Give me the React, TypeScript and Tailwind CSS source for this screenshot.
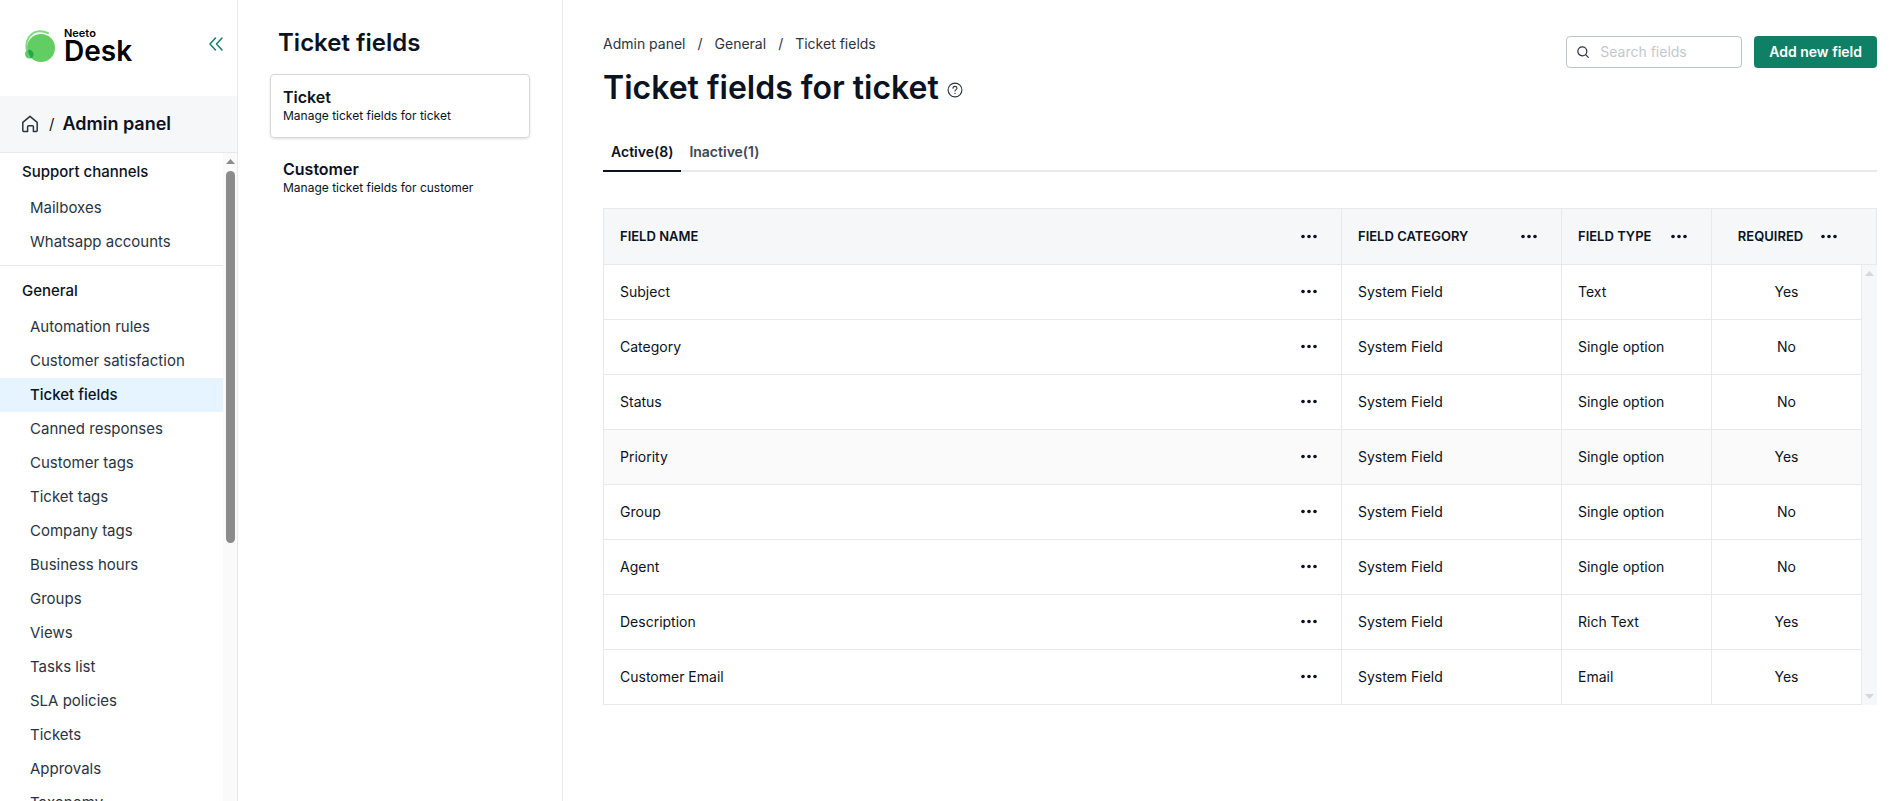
import { useState } from 'react';
import clsx from 'clsx';

interface NavSection {
  title: string;
  items: string[];
}

interface TicketField {
  name: string;
  category: string;
  type: string;
  required: boolean;
}

const NAV_SECTIONS: NavSection[] = [
  { title: 'Support channels', items: ['Mailboxes', 'Whatsapp accounts'] },
  {
    title: 'General',
    items: [
      'Automation rules',
      'Customer satisfaction',
      'Ticket fields',
      'Canned responses',
      'Customer tags',
      'Ticket tags',
      'Company tags',
      'Business hours',
      'Groups',
      'Views',
      'Tasks list',
      'SLA policies',
      'Tickets',
      'Approvals',
      'Taxonomy',
    ],
  },
];

const RESOURCES = [
  { name: 'Ticket', description: 'Manage ticket fields for ticket' },
  { name: 'Customer', description: 'Manage ticket fields for customer' },
];

const TABS = ['Active(8)', 'Inactive(1)'];

const BREADCRUMBS = ['Admin panel', 'General', 'Ticket fields'];

const FIELDS: TicketField[] = [
  { name: 'Subject', category: 'System Field', type: 'Text', required: true },
  { name: 'Category', category: 'System Field', type: 'Single option', required: false },
  { name: 'Status', category: 'System Field', type: 'Single option', required: false },
  { name: 'Priority', category: 'System Field', type: 'Single option', required: true },
  { name: 'Group', category: 'System Field', type: 'Single option', required: false },
  { name: 'Agent', category: 'System Field', type: 'Single option', required: false },
  { name: 'Description', category: 'System Field', type: 'Rich Text', required: true },
  { name: 'Customer Email', category: 'System Field', type: 'Email', required: true },
];

const LogoMark = () => (
  <svg className="h-8 w-[31px] shrink-0" viewBox="0 0 31 32" fill="none" aria-hidden="true">
    <circle cx="16" cy="18" r="14" fill="#62cd62" />
    <path d="M1.800 20C-.4 10 6 1.200 15 1.200c3 0 5.500.6 8 2" stroke="#7ddb7a" strokeWidth="1.900" strokeLinecap="round" />
    <circle cx="4.500" cy="24" r="4.500" fill="#62cd62" />
    <path d="M3 19.800a4.500 4.500 0 0 1 3 8.400A14 14 0 0 1 3 19.800Z" fill="#22a750" />
  </svg>
);

const CollapseIcon = () => (
  <svg className="h-4 w-4" viewBox="0 0 16 16" fill="none" stroke="currentColor" strokeWidth="1.500" aria-hidden="true">
    <path d="M7.500 2 2 8l5.500 6M14 2 8.500 8l5.500 6" strokeLinecap="round" strokeLinejoin="round" />
  </svg>
);

const HomeIcon = () => (
  <svg className="h-[18px] w-[18px]" viewBox="0 0 18 18" fill="none" stroke="currentColor" strokeWidth="1.500" strokeLinejoin="round" aria-hidden="true">
    <path d="M1.800 7.400 9 1.400l7.200 6v8.200c0 .5-.3.800-.8.800h-3v-4.600c0-.6-.4-1-1-1H7.600c-.6 0-1 .4-1 1v4.600h-4c-.5 0-.8-.3-.8-.8Z" />
  </svg>
);

const HelpIcon = () => (
  <svg className="h-4 w-4" viewBox="0 0 16 16" fill="none" stroke="currentColor" strokeLinecap="round" aria-hidden="true">
    <circle cx="8" cy="8" r="6.900" strokeWidth="1.100" />
    <path d="M6 6.300C6 5 6.900 4.400 8 4.400s2 .7 2 1.800C10 7.600 8 7.700 8 9" strokeWidth="1.100" />
    <circle cx="8" cy="11.400" r=".7" fill="currentColor" stroke="none" />
  </svg>
);

const SearchIcon = () => (
  <svg className="h-3 w-3 shrink-0" viewBox="0 0 12 12" fill="none" stroke="currentColor" strokeWidth="1.200" strokeLinecap="round" aria-hidden="true">
    <circle cx="5.300" cy="5.300" r="4.500" />
    <path d="m8.600 8.600 2.700 2.700" />
  </svg>
);

const MenuButton = ({ label }: { label: string }) => (
  <button type="button" aria-label={label} className="flex h-6 w-8 shrink-0 items-center justify-center">
    <svg className="h-4 w-4" viewBox="0 0 16 16" fill="currentColor" aria-hidden="true">
      <circle cx="2" cy="7.500" r="1.800" />
      <circle cx="8" cy="7.500" r="1.800" />
      <circle cx="14" cy="7.500" r="1.800" />
    </svg>
  </button>
);

const Arrow = ({ down }: { down?: boolean }) => (
  <svg className="h-[5px] w-[9px]" viewBox="0 0 9 5" fill="currentColor" aria-hidden="true">
    <path d={down ? 'M0 0h9L4.500 5Z' : 'M0 5h9L4.500 0Z'} />
  </svg>
);

const Sidebar = () => (
  <aside className="flex w-[238px] shrink-0 flex-col border-r border-[#e8e9eb]">
    <div className="flex h-24 shrink-0 items-start justify-between pt-7 pr-[13px] pl-[25px]">
      <a href="#desk" className="flex items-center gap-2">
        <LogoMark />
        <span className="flex flex-col font-semibold text-black">
          <span className="text-[11px] leading-[11px]">Neeto</span>
          <span className="text-[28px] leading-[25px]">Desk</span>
        </span>
      </a>
      <button type="button" aria-label="Collapse sidebar" className="h-8 text-[#0f8066]">
        <CollapseIcon />
      </button>
    </div>

    <div className="flex h-[57px] shrink-0 items-center border-b border-[#e8e9eb] bg-[#f5f7f9] pl-[21px]">
      <a href="#home" aria-label="Home" className="text-[#2a3441]">
        <HomeIcon />
      </a>
      <span className="ml-[10px] text-[15px]">/</span>
      <span className="ml-2 text-lg font-semibold">Admin panel</span>
    </div>

    <div className="flex min-h-0 flex-1">
      <nav className="min-w-0 flex-1 overflow-hidden pt-1 text-[15px]">
        {NAV_SECTIONS.map((section) => (
          <div key={section.title} className="mb-[10px] border-b border-[#e8e9eb] pb-[6px]">
            <h2 className="mb-1 pl-[22px] leading-[30px] font-medium">{section.title}</h2>
            <ul>
              {section.items.map((item) => (
                <li key={item}>
                  <a
                    href="#nav"
                    className={clsx(
                      'block pl-[30px] leading-[34px]',
                      item === 'Ticket fields' ? 'bg-[#e5f4ff] font-medium' : 'text-[#2a3441]'
                    )}
                  >
                    {item}
                  </a>
                </li>
              ))}
            </ul>
          </div>
        ))}
      </nav>
      <div className="flex w-[14px] flex-col items-center bg-[#fafafa] pt-[6px] text-[#8b8b8b]" aria-hidden="true">
        <Arrow />
        <div className="mt-[7px] h-[58%] w-[9px] rounded-full bg-[#8b8b8b]" />
      </div>
    </div>
  </aside>
);

const ResourcePanel = () => {
  const [selected, setSelected] = useState('Ticket');

  return (
    <section className="w-[325px] shrink-0 border-r border-[#e8e9eb] px-8 pt-[27px]">
      <h2 className="pl-2 text-2xl leading-8 font-semibold">Ticket fields</h2>
      <div className="mt-[15px] flex flex-col gap-2">
        {RESOURCES.map((resource) => (
          <button
            key={resource.name}
            type="button"
            onClick={() => setSelected(resource.name)}
            className={clsx(
              'flex h-16 flex-col rounded border px-3 pt-3 text-left',
              selected === resource.name ? 'border-[#d5d7da] shadow-sm' : 'border-transparent'
            )}
          >
            <span className="text-base leading-5 font-semibold">{resource.name}</span>
            <span className="text-xs leading-[18px]">{resource.description}</span>
          </button>
        ))}
      </div>
    </section>
  );
};

const FieldsTable = () => (
  <table className="mt-9 w-full table-fixed border-separate border-spacing-0 border-t border-l border-[#e8e9eb] text-sm">
    <colgroup>
      <col />
      <col className="w-[220px]" />
      <col className="w-[150px]" />
      <col className="w-[150px]" />
      <col className="w-[15px]" />
    </colgroup>
    <thead>
      <tr className="h-14 bg-[#f5f7f9] text-left text-[13px]">
        {['Field name', 'Field category', 'Field type', 'Required'].map((title) => (
          <th
            key={title}
            colSpan={title === 'Required' ? 2 : 1}
            className={clsx(
              'border-r border-b border-[#e8e9eb] p-0 pl-4 font-semibold uppercase',
              title === 'Required' ? 'pr-[31px] text-center' : 'pr-4'
            )}
          >
            <div className="flex items-center">
              <span className="flex-1">{title}</span>
              <MenuButton label={`${title} column menu`} />
            </div>
          </th>
        ))}
      </tr>
    </thead>
    <tbody>
      {FIELDS.map((field, index) => (
        <tr key={field.name} className={clsx('h-[55px]', field.name === 'Priority' && 'bg-[#fafafa]')}>
          <td className="border-r border-b border-[#e8e9eb] px-4 py-0">
            <div className="flex items-center">
              <span className="flex-1">{field.name}</span>
              <MenuButton label={`${field.name} menu`} />
            </div>
          </td>
          <td className="border-r border-b border-[#e8e9eb] px-4 py-0">{field.category}</td>
          <td className="border-r border-b border-[#e8e9eb] px-4 py-0">{field.type}</td>
          <td className="border-r border-b border-[#e8e9eb] px-4 py-0 text-center">{field.required ? 'Yes' : 'No'}</td>
          {index === 0 && (
            <td rowSpan={FIELDS.length} aria-hidden="true" className="h-px bg-[#f5f7f9] p-0 text-[#d5d7da]">
              <div className="flex h-full flex-col items-center justify-between py-[6px]">
                <Arrow />
                <Arrow down />
              </div>
            </td>
          )}
        </tr>
      ))}
    </tbody>
  </table>
);

const App = () => {
  const [activeTab, setActiveTab] = useState(TABS[0]);
  const [search, setSearch] = useState('');

  return (
    <div className="flex h-screen overflow-hidden bg-white font-['Inter',sans-serif] text-[#0b1221]">
      <Sidebar />
      <ResourcePanel />

      <main className="min-w-0 flex-1 pt-[34px] pr-5 pl-10">
        <header className="flex items-start justify-between">
          <div>
            <nav aria-label="Breadcrumb" className="flex gap-3 text-sm text-[#2a3441]">
              {BREADCRUMBS.map((crumb, index) => (
                <span key={crumb} className="flex gap-3">
                  {index > 0 && <span>/</span>}
                  <a href="#crumb">{crumb}</a>
                </span>
              ))}
            </nav>
            <div className="mt-[14px] flex items-center gap-2">
              <h1 className="text-[32px] leading-10 font-semibold">Ticket fields for ticket</h1>
              <button type="button" aria-label="Help" className="pt-1 text-[#2a3441]">
                <HelpIcon />
              </button>
            </div>
          </div>

          <div className="flex gap-3 pt-[2px]">
            <label className="flex h-8 w-44 items-center gap-[11px] rounded border border-[#bfc4c9] px-[10px] text-[#2a3441]">
              <SearchIcon />
              <input
                type="search"
                aria-label="Search fields"
                placeholder="Search fields"
                value={search}
                onChange={(e) => setSearch(e.target.value)}
                className="w-full min-w-0 text-sm outline-none placeholder:text-[#c4c8cc]"
              />
            </label>
            <button type="button" className="h-8 rounded bg-[#0f8066] px-[15px] text-sm font-semibold text-white">
              Add new field
            </button>
          </div>
        </header>

        <div role="tablist" className="mt-[30px] flex border-b-2 border-[#e8e9eb]">
          {TABS.map((tab) => (
            <button
              key={tab}
              type="button"
              role="tab"
              aria-selected={activeTab === tab}
              onClick={() => setActiveTab(tab)}
              className={clsx(
                '-mb-[2px] border-b-2 px-2 pt-1 pb-2 text-sm font-semibold',
                activeTab === tab ? 'border-[#0b1221]' : 'border-transparent text-[#3c4654]'
              )}
            >
              {tab}
            </button>
          ))}
        </div>

        <FieldsTable />
      </main>
    </div>
  );
};

export default App;
